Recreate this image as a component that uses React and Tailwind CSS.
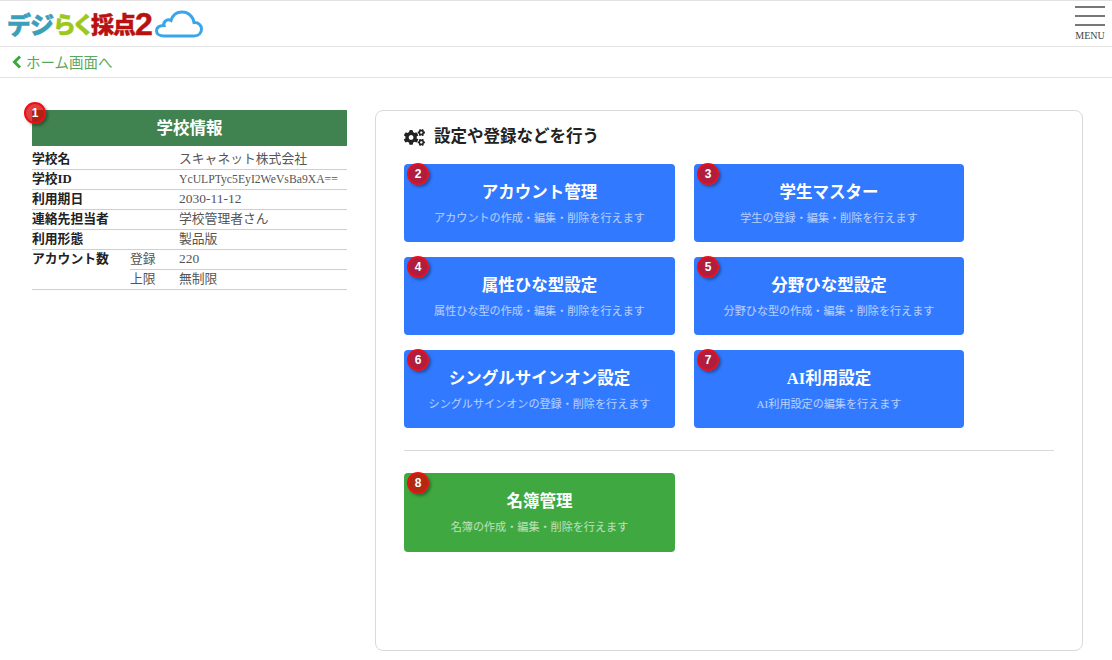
import React from "react";
import { FaCogs } from "react-icons/fa";

const serif = "font-['Liberation_Serif','Noto_Sans_CJK_JP',serif]";

function Badge({ n, cls }) {
  return (
    <span className={`absolute flex h-[22px] w-[22px] items-center justify-center rounded-full border-2 border-[#ea0f18] bg-[rgba(215,0,0,0.75)] font-['Liberation_Sans',sans-serif] text-[12px] font-bold text-white shadow-[2px_2px_3px_rgba(0,0,0,0.35)] ${cls}`}>
      {n}
    </span>
  );
}

function Card({ n, title, sub, green }) {
  return (
    <div className={`relative flex w-full flex-col items-center rounded-[4px] pt-[17px] ${green ? "h-[79px] bg-[#40a840]" : "h-[78px] bg-[#3179fe]"}`}>
      <Badge n={n} cls="left-[3px] top-[-1px]" />
      <div className="text-[16.5px] leading-[24px] font-bold text-white">{title}</div>
      <div className="mt-[5px] text-[11.1px] leading-[16px] text-white/65">{sub}</div>
    </div>
  );
}

function Row({ label, mid, value, small, latin }) {
  const size = small ? "text-[11.7px]" : latin ? "text-[13.5px]" : "text-[12.8px]";
  return (
    <div className="flex h-[20px] items-center border-b border-[#cfcfcf] text-[12.8px]">
      <div className="w-[98px] font-bold text-[#222]">{label}</div>
      <div className="w-[49px] text-[#555]">{mid}</div>
      <div className={`${size} text-[#555]`}>{value}</div>
    </div>
  );
}

export default function App() {
  return (
    <div className={`flex h-[660px] w-[1112px] flex-col overflow-hidden bg-white ${serif}`}>
      <header className="flex h-[47px] items-center justify-between border-y border-[#e2e2e2] px-[7px]">
        <div className="flex items-center font-['Noto_Sans_CJK_JP',sans-serif] leading-none font-black whitespace-nowrap [-webkit-text-stroke:0.5px]">
          <span className="text-[24px] tracking-[-1px] text-[#3c9eb8]">デジ</span>
          <span className="text-[23px] tracking-[-4px] text-[#9cc81e]">らく</span>
          <span className="text-[23px] tracking-[-1px] text-[#b9110f]">採点</span>
          <span className="font-['Liberation_Sans',sans-serif] text-[32px] font-bold text-[#b9110f]">2</span>
          <svg viewBox="0 0 48 28" className="ml-[2px] h-[28px] w-[48px]" fill="none" stroke="#3aa6ea" strokeWidth="3">
            <path d="M9 26 H39 C44 26 46.5 22.5 46.5 19 C46.5 15 43 12 39 12.5 C38 6 33 2 27 2 C21.5 2 17.5 5.5 16 10.5 C14.5 9.5 12 9.5 10.5 11 C9 12.3 8.5 14 9 15.5 C5 15.5 1.5 17 1.5 21 C1.5 24 4.5 26 9 26 Z" />
          </svg>
        </div>
        <div className="flex w-[30px] flex-col items-center">
          <div className="h-[2px] w-[30px] bg-[#777]" />
          <div className="mt-[7px] h-[2px] w-[30px] bg-[#777]" />
          <div className="mt-[7px] h-[2px] w-[30px] bg-[#777]" />
          <div className="mt-[5px] text-[10px] leading-[10px] text-[#444]">MENU</div>
        </div>
      </header>

      <nav className="flex h-[31px] items-center border-b border-[#e2e2e2] pl-[12px] text-[14.5px] text-[#5aa760]">
        <svg viewBox="0 0 10 14" className="mr-[4px] h-[14px] w-[10px]" fill="none" stroke="#3ea83f" strokeWidth="3">
          <path d="M8 1.5 L2.5 7 L8 12.5" />
        </svg>
        <span className="mt-[3px]">ホーム画面へ</span>
      </nav>

      <main className="flex items-start pt-[32px] pl-[32px]">
        <section className="relative w-[315px]">
          <Badge n="1" cls="left-[-8px] top-[-8px]" />
          <div className="mb-[4px] flex h-[36px] items-center justify-center bg-[#418350] pt-[2px] text-[16.5px] font-bold text-white">学校情報</div>
          <Row label="学校名" value="スキャネット株式会社" />
          <Row label="学校ID" value="YcULPTyc5EyI2WeVsBa9XA==" small />
          <Row label="利用期日" value="2030-11-12" latin />
          <Row label="連絡先担当者" value="学校管理者さん" />
          <Row label="利用形態" value="製品版" />
          <div className="flex h-[20px] items-center text-[12.8px]">
            <div className="w-[98px] font-bold text-[#222]">アカウント数</div>
            <div className="flex h-full flex-1 items-center border-b border-[#cfcfcf] text-[#555]">
              <div className="w-[49px]">登録</div>
              <div className="text-[13.5px]">220</div>
            </div>
          </div>
          <div className="flex h-[20px] items-center border-b border-[#cfcfcf] pl-[98px] text-[12.8px] text-[#555]">
            <div className="w-[49px]">上限</div>
            <div>無制限</div>
          </div>
        </section>

        <section className="ml-[28px] h-[541px] w-[708px] rounded-[8px] border border-[#d9d9d9] px-[28px] pt-[15px]">
          <h2 className="flex h-[22px] items-center text-[16.5px] font-bold text-[#222]">
            <FaCogs className="mr-[9px] h-[17px] w-[21px] text-[#222]" />
            設定や登録などを行う
          </h2>
          <div className="mt-[16px] grid grid-cols-[271px_270px] gap-x-[19px] gap-y-[15px]">
            <Card n="2" title="アカウント管理" sub="アカウントの作成・編集・削除を行えます" />
            <Card n="3" title="学生マスター" sub="学生の登録・編集・削除を行えます" />
            <Card n="4" title="属性ひな型設定" sub="属性ひな型の作成・編集・削除を行えます" />
            <Card n="5" title="分野ひな型設定" sub="分野ひな型の作成・編集・削除を行えます" />
            <Card n="6" title="シングルサインオン設定" sub="シングルサインオンの登録・削除を行えます" />
            <Card n="7" title="AI利用設定" sub="AI利用設定の編集を行えます" />
          </div>
          <div className="mt-[22px] h-px w-[650px] bg-[#d9d9d9]" />
          <div className="mt-[22px] w-[271px]">
            <Card n="8" title="名簿管理" sub="名簿の作成・編集・削除を行えます" green />
          </div>
        </section>
      </main>
    </div>
  );
}
